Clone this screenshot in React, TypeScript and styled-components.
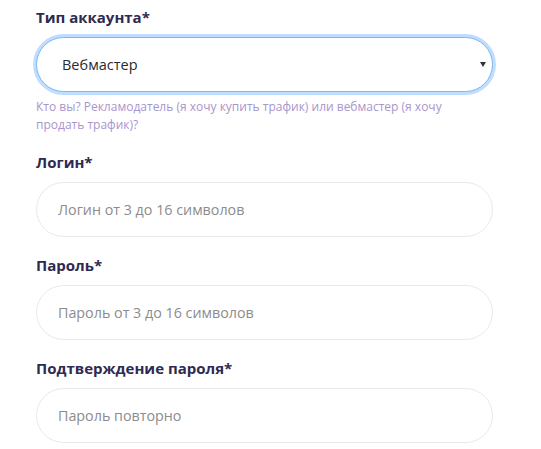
import React from "react";
import styled, { createGlobalStyle } from "styled-components";

const GlobalStyle = createGlobalStyle`
  html, body {
    margin: 0;
    padding: 0;
    background: #ffffff;
  }
  body {
    font-family: "Open Sans", "Noto Sans", sans-serif;
  }
`;

const Form = styled.form`
  width: 457px;
  padding: 7px 0 0 36px;
  display: flex;
  flex-direction: column;
  gap: 18px;
`;

const Group = styled.div`
  display: flex;
  flex-direction: column;
`;

const Label = styled.label`
  font-size: 15px;
  line-height: 21px;
  font-weight: 700;
  color: #2e2a52;
  margin-bottom: 9px;
`;

const SelectWrap = styled.div`
  position: relative;

  &::after {
    content: "";
    position: absolute;
    right: 7px;
    top: 25px;
    border-left: 3px solid transparent;
    border-right: 3px solid transparent;
    border-top: 5px solid #333;
    pointer-events: none;
  }
`;

const Select = styled.select`
  appearance: none;
  width: 100%;
  height: 55px;
  box-sizing: border-box;
  border: 1px solid #80b6f2;
  border-radius: 28px;
  box-shadow: 0 0 0 3px rgba(128, 189, 255, 0.5);
  background: #fff;
  padding: 0 25px;
  font-family: inherit;
  font-size: 14.5px;
  color: #2b2b2b;
  outline: none;
`;

const Input = styled.input`
  width: 100%;
  height: 55px;
  box-sizing: border-box;
  border: 1px solid #e9e9e9;
  border-radius: 28px;
  background: #fff;
  padding: 0 21px;
  font-family: inherit;
  font-size: 14.3px;
  color: #2b2b2b;
  outline: none;

  &::placeholder {
    color: #8c8c8c;
  }
`;

const Hint = styled.small`
  margin-top: 6px;
  font-size: 12px;
  line-height: 18px;
  color: #a995cc;
`;

const fields = [
  { label: "Логин*", placeholder: "Логин от 3 до 16 символов", type: "text" },
  { label: "Пароль*", placeholder: "Пароль от 3 до 16 символов", type: "password" },
  { label: "Подтверждение пароля*", placeholder: "Пароль повторно", type: "password" },
];

export default function App() {
  return (
    <>
      <GlobalStyle />
      <Form>
        <Group>
          <Label>Тип аккаунта*</Label>
          <SelectWrap>
            <Select defaultValue="webmaster">
              <option value="advertiser">Рекламодатель</option>
              <option value="webmaster">Вебмастер</option>
            </Select>
          </SelectWrap>
          <Hint>
            Кто вы? Рекламодатель (я хочу купить трафик) или вебмастер (я хочу
            продать трафик)?
          </Hint>
        </Group>
        {fields.map((f) => (
          <Group key={f.label}>
            <Label>{f.label}</Label>
            <Input type={f.type} placeholder={f.placeholder} />
          </Group>
        ))}
      </Form>
    </>
  );
}
